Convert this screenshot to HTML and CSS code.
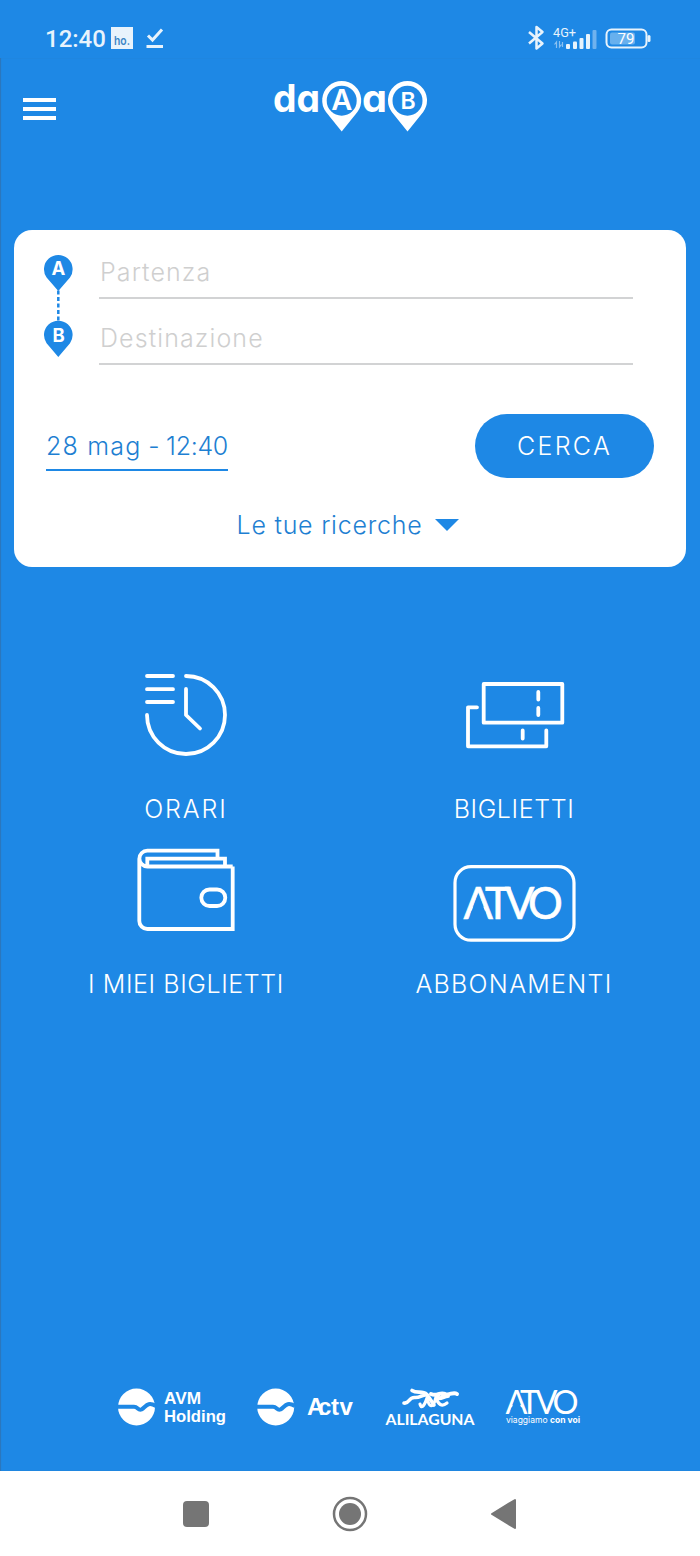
FILE: index.html
```html
<!DOCTYPE html>
<html lang="it">
<head>
  <meta charset="UTF-8" />
  <meta name="viewport" content="width=device-width, initial-scale=1.0"/>
  <title>daAaB</title>
  <link rel="stylesheet" href="styles.css">
</head>
<body>

  <div class="status-bar">
    <span class="clock">12:40</span>
    <svg class="carrier" width="22" height="22" viewBox="0 0 22 22">
      <rect width="22" height="22" fill="#e8f3fc"/>
      <text x="3" y="18" textLength="16" lengthAdjust="spacingAndGlyphs" class="carrier-text">ho.</text>
    </svg>
    <svg class="check" width="18" height="22" viewBox="0 0 18 22" fill="none" stroke="#e8f3fc" stroke-width="3">
      <path d="M2 8.5l4.5 4.5L16 2.5M0.500 19.500H17"/>
    </svg>
    <svg class="status-right" width="124" height="30" viewBox="0 0 124 30">
      <path d="M2 9L15.500 20.500L9.500 25.500V4L15.500 9L2 20.500" fill="none" stroke="#e8f3fc" stroke-width="2.500" stroke-linejoin="round"/>
      <text x="26" y="13.500" textLength="23" lengthAdjust="spacingAndGlyphs" class="net-text">4G+</text>
      <path d="M29.500 25v-6l-2 2.500M32.500 18v6l2-2.500M35.500 24v-5" fill="none" stroke="#8bc1f1" stroke-width="1.200"/>
      <g fill="#e8f3fc">
        <rect x="39" y="21" width="4" height="5" rx="1"/>
        <rect x="46" y="18.500" width="4" height="7.500" rx="1"/>
        <rect x="52.500" y="15" width="4" height="11" rx="1"/>
        <rect x="59" y="11" width="4" height="15" rx="1"/>
        <rect x="65.500" y="7" width="4" height="19" rx="1" opacity=".4"/>
      </g>
      <rect x="79.500" y="6.500" width="40" height="18" rx="5" fill="none" stroke="#e8f3fc" stroke-width="2"/>
      <rect x="83" y="9.500" width="25" height="12" rx="2" fill="#67b0ee"/>
      <rect x="120.500" y="12" width="3" height="7" rx="1.500" fill="#e8f3fc"/>
      <text x="90.500" y="21" textLength="17" lengthAdjust="spacingAndGlyphs" class="battery-text">79</text>
    </svg>
  </div>

  <main class="app">
    <header class="header">
      <svg class="hamburger" width="33" height="22" viewBox="0 0 33 22" fill="#fff">
        <rect width="33" height="4"/>
        <rect y="9" width="33" height="4"/>
        <rect y="18" width="33" height="4"/>
      </svg>
      <svg class="logo" width="156" height="62" viewBox="0 -10 156 62">
        <g fill="#fff">
          <path d="M68.700 50.500L53 31A19.500 19.500 0 1 1 84.400 31Z"/>
          <path d="M134.500 50.500L118.800 31A19.500 19.500 0 1 1 150.200 31Z"/>
        </g>
        <g fill="#1e88e5">
          <circle cx="68.700" cy="19.700" r="15"/>
          <circle cx="134.500" cy="19.700" r="15"/>
        </g>
        <text x="0" y="31.300" textLength="47" lengthAdjust="spacingAndGlyphs" class="logo-text">da</text>
        <text x="68.700" y="29" text-anchor="middle" class="logo-pin-a">A</text>
        <text x="89" y="31.300" textLength="25" lengthAdjust="spacingAndGlyphs" class="logo-text">a</text>
        <text x="135" y="27.800" text-anchor="middle" class="logo-pin-b">B</text>
      </svg>
    </header>

    <form class="search-card">
      <div class="route">
        <svg class="pins" width="31" height="104" viewBox="0 0 31 104">
          <g fill="#1e88e5">
            <path d="M15.300 37L3.600 23.500A14.300 14.300 0 1 1 27 23.500Z"/>
            <path d="M15.300 103L3.600 89.200A14.300 14.300 0 1 1 27 89.200Z"/>
          </g>
          <path d="M15.300 36.500V67" stroke="#1e88e5" stroke-width="2.500" stroke-dasharray="4 2.500"/>
          <text x="15.300" y="21" text-anchor="middle" class="pin-text">A</text>
          <text x="15.600" y="88" text-anchor="middle" class="pin-text">B</text>
        </svg>
        <div class="fields">
          <input type="text" class="field from" placeholder="Partenza">
          <input type="text" class="field to" placeholder="Destinazione">
        </div>
      </div>
      <div class="when-row">
        <div class="when">
          <span class="day">28 mag</span>
          <span class="time">- 12:40</span>
        </div>
        <button type="button" class="search-btn">CERCA</button>
      </div>
      <div class="recent">
        <span>Le tue ricerche</span>
        <svg width="24" height="12" viewBox="0 0 24 12" fill="#1e88e5"><path d="M0 0H24L12 12Z"/></svg>
      </div>
    </form>

    <nav class="menu">
      <a class="item">
        <svg width="130" height="110" viewBox="0 0 130 110" class="icon">
          <path d="M26 16H52M26 29.200H52M26 42H52M65 16A39 39 0 1 1 26 55M65 29V55L79 68.500"/>
        </svg>
        <span class="timetable">ORARI</span>
      </a>
      <a class="item">
        <svg width="130" height="110" viewBox="0 0 130 110" class="icon">
          <path d="M34.700 24H113.300V62.700H34.700ZM89.300 32V39.500M89.300 48V55M28 47.300H19V86.300H97.300V70.500M73.700 70.500V78.500"/>
        </svg>
        <span class="tickets">BIGLIETTI</span>
      </a>
      <a class="item">
        <svg width="130" height="110" viewBox="0 0 130 110" class="icon wallet">
          <path d="M111.700 31.500H26.300A7.900 7.900 0 0 1 26.300 15.700H96.500V23M26.300 31V23.600H104V31.500M18.300 23.500V86A8 8 0 0 0 26.300 94H111.700V31.500"/>
          <rect x="80.300" y="54.500" width="24" height="16.500" rx="8.200"/>
        </svg>
        <span class="my-tickets">I MIEI BIGLIETTI</span>
      </a>
      <a class="item">
        <svg width="130" height="110" viewBox="0 0 130 110">
          <rect x="6" y="31.700" width="119" height="73.500" rx="16" fill="none" stroke="#fff" stroke-width="3.200"/>
          <text x="14.500 36 56 79" y="83.500" class="atvo-card">ATVO</text>
          <path d="M29.300 58.500L21.300 79.500H37.300Z" fill="#1e88e5"/>
        </svg>
        <span class="passes">ABBONAMENTI</span>
      </a>
    </nav>

    <footer class="partners">
      <svg width="110" height="45" viewBox="0 0 110 45" fill="#fff">
        <circle cx="18.500" cy="22" r="18.500"/>
        <path d="M-1 21.800H16C20 21.800 20 26 23.500 24.500C28 22 29 16 38 21" fill="none" stroke="#1e88e5" stroke-width="4"/>
        <text x="46" y="19" textLength="37" lengthAdjust="spacingAndGlyphs" class="avm-text">AVM</text>
        <text x="46" y="36.500" textLength="62" lengthAdjust="spacingAndGlyphs" class="avm-text">Holding</text>
      </svg>
      <svg width="98" height="45" viewBox="0 0 98 45" fill="#fff">
        <circle cx="18.700" cy="22" r="18.500"/>
        <path d="M-1 21.800H16C20 21.800 20 26 23.500 24.500C28 22 29 16 38 21" fill="none" stroke="#1e88e5" stroke-width="4"/>
        <text x="50 61 74 82.500" y="30.300" class="actv-text">Actv</text>
      </svg>
      <svg width="92" height="45" viewBox="0 0 92 45" fill="none" stroke="#fff" stroke-linecap="round" stroke-linejoin="round">
        <path d="M28 5.500C33 9 38 5 43 9.500L50 20M20 18C26 19 24 12 31 12.500C36 13 39 9 43 10" stroke-width="3.600"/>
        <path d="M36 19C37 24 40 22 43 13C45 22 49 25 52 12C54 20 58 22 63 18" stroke-width="3.200"/>
        <path d="M47 9C53 12 55 7 61 9C66 11 69 6 73 9M53 13C58 14 60 11 64 11" stroke-width="4"/>
        <text x="1.500" y="40" textLength="89" lengthAdjust="spacingAndGlyphs" class="alilaguna-text">ALILAGUNA</text>
      </svg>
      <svg width="80" height="55" viewBox="0 -10 80 55" fill="#fff">
        <text x="0.500 15 30.500 47.500" y="29" class="atvo-text">ATVO</text>
        <path d="M11.500 10.500L5.500 26H17.500Z" fill="#1e88e5"/>
        <text x="1" y="38" textLength="74" lengthAdjust="spacingAndGlyphs" class="atvo-sub">viaggiamo <tspan class="bold">con voi</tspan></text>
      </svg>
    </footer>
  </main>

  <div class="nav-bar">
    <svg width="36" height="36" viewBox="0 0 36 36"><rect x="5" y="5" width="26" height="26" rx="4" fill="#757575"/></svg>
    <svg width="36" height="36" viewBox="0 0 36 36">
      <circle cx="18" cy="18" r="16" fill="none" stroke="#757575" stroke-width="2.500"/>
      <circle cx="18" cy="18" r="11" fill="#757575"/>
    </svg>
    <svg width="36" height="36" viewBox="0 0 36 36"><path d="M6 18L29 4V32Z" fill="#757575" stroke="#757575" stroke-width="2" stroke-linejoin="round"/></svg>
  </div>

</body>
</html>
```
FILE: styles.css
```css
* {
  box-sizing: border-box;
}

body {
  margin: 0;
  width: 700px;
  height: 1556px;
  display: flex;
  flex-direction: column;
  background: #1e88e5;
  color: #fff;
  font-family: Inter, "Open Sans", sans-serif;
  font-size: 25px;
  font-weight: 300;
}

svg {
  display: block;
  flex: none;
}

/* status bar */
.status-bar {
  height: 58px;
  padding: 18px 49px 0 45px;
  display: flex;
  align-items: center;
}

.clock {
  width: 66px;
  padding-top: 2px;
  font-family: Roboto, sans-serif;
  font-size: 24px;
  font-weight: 500;
  color: #e8f3fc;
}

.check {
  margin-left: 13px;
}

.status-right {
  margin-left: auto;
}

.carrier-text {
  font: 600 12px Inter, sans-serif;
  fill: #3c86c6;
}

.net-text {
  font: 400 12.5px Roboto, sans-serif;
  fill: #e8f3fc;
}

.battery-text {
  font: 400 14.5px Roboto, sans-serif;
  fill: #fff;
}

.app {
  flex: 1;
  display: flex;
  flex-direction: column;
  box-shadow: inset 1px 0 1px rgba(60, 100, 140, 0.5);
}

/* header */
.header {
  height: 172px;
  padding: 13px 22px 0 23px;
  display: grid;
  grid-template-columns: 1fr auto 1fr;
  align-items: start;
}

.hamburger {
  margin-top: 27px;
}

.logo-text,
.logo-pin-a,
.logo-pin-b {
  fill: #fff;
  font-family: Inter, sans-serif;
  font-weight: 600;
}

.logo-text {
  font-size: 38px;
  font-weight: 700;
  font-feature-settings: "cv11";
}

.logo-pin-a {
  font-size: 29px;
}

.logo-pin-b {
  font-size: 23px;
}

/* search card */
.search-card {
  margin: 0 14px;
  height: 337px;
  padding: 3px 32px 0;
  background: #fff;
  border-radius: 18px;
  color: #1e7fd2;
}

.route {
  display: flex;
  margin-left: -3px;
}

.pins {
  margin: 21px 25px 0 0;
}

.pin-text {
  font: 700 18.5px Inter, sans-serif;
  fill: #fff;
}

.fields {
  width: 534px;
}

.field {
  display: block;
  width: 100%;
  height: 66px;
  padding: 14px 0 0 1px;
  border: none;
  border-bottom: 2px solid #d2d3d4;
  outline: none;
  background: none;
  font: inherit;
  letter-spacing: 1.1px;
}

.field::placeholder {
  color: #cfcfcf;
  opacity: 1;
}

.when-row {
  margin-top: 49px;
  height: 64px;
  display: flex;
  justify-content: space-between;
}

.when {
  align-self: flex-end;
  display: flex;
  justify-content: space-between;
  width: 182px;
  margin-bottom: 7px;
  border-bottom: 2px solid #1e88e5;
  line-height: 46px;
  white-space: nowrap;
}

.day {
  letter-spacing: 1.2px;
}

.time {
  letter-spacing: -0.3px;
}

.search-btn {
  width: 179px;
  height: 64px;
  border: none;
  border-radius: 32px;
  background: #1e88e5;
  color: #fff;
  font: inherit;
  letter-spacing: 2.3px;
  cursor: pointer;
}

.recent {
  margin-top: 27px;
  padding-right: 4px;
  display: flex;
  align-items: center;
  justify-content: center;
  gap: 13px;
  line-height: 40px;
  letter-spacing: 0.75px;
}

/* main menu */
.menu {
  margin-top: 93px;
  padding: 0 22px;
  display: grid;
  grid-template-columns: 1fr 1fr;
  row-gap: 11px;
}

.item {
  display: flex;
  flex-direction: column;
  align-items: center;
  gap: 24px;
  line-height: 30px;
}

.timetable {
  letter-spacing: 1.9px;
}

.tickets,
.my-tickets {
  letter-spacing: 0.6px;
}

.passes {
  letter-spacing: 1.3px;
}

.icon {
  fill: none;
  stroke: #fff;
  stroke-width: 3.8;
  stroke-linecap: round;
  stroke-linejoin: round;
}

.wallet {
  stroke-linecap: butt;
  stroke-linejoin: miter;
}

.atvo-card {
  font: 400 43.5px Lato, sans-serif;
  fill: #fff;
  stroke: #fff;
  stroke-width: 0.6;
}

/* partners */
.partners {
  margin-top: auto;
  padding: 0 0 41px 118px;
  display: flex;
  align-items: flex-end;
  gap: 29px;
}

.avm-text {
  font: 700 16px "Liberation Sans", sans-serif;
}

.actv-text {
  font: 700 24px "Liberation Sans", sans-serif;
}

.alilaguna-text {
  font: 700 15px Lato, sans-serif;
  fill: #fff;
  stroke: none;
}

.atvo-text {
  font: 400 32.5px Lato, sans-serif;
}

.atvo-sub {
  font: 400 9px Inter, sans-serif;
}

.bold {
  font-weight: 700;
}

/* android navigation */
.nav-bar {
  height: 85px;
  background: #fff;
  display: flex;
  align-items: center;
  justify-content: center;
  gap: 118px;
}
```
